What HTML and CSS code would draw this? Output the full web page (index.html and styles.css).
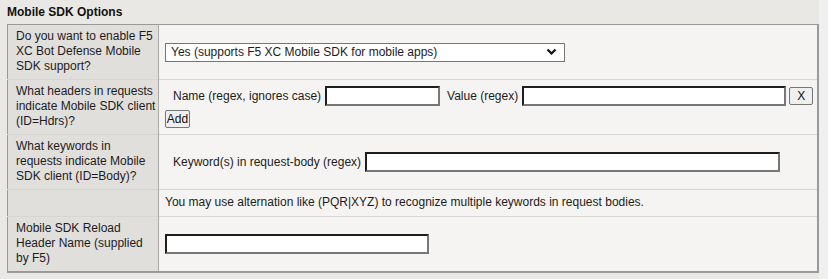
FILE: index.html
```html
<!DOCTYPE html>
<html>
<head>
<title>Mobile SDK Options</title>
<link rel="stylesheet" href="styles.css">
</head>
<body>
  <div id="page">
    <h3 class="section-title">Mobile SDK Options</h3>
    <table class="options-table">
      <colgroup>
        <col class="label-col">
        <col>
      </colgroup>
      <tr>
        <td class="label-cell">Do you want to enable F5 XC Bot Defense Mobile SDK support?</td>
        <td class="value-cell">
          <div class="select-box">
            <span>Yes (supports F5 XC Mobile SDK for mobile apps)</span>
            <svg width="11" height="8" viewBox="0 0 11 8"><path d="M1.5 1.5 L5.5 5.5 L9.5 1.5" fill="none" stroke="#111" stroke-width="2.2"/></svg>
          </div>
        </td>
      </tr>
      <tr>
        <td class="label-cell">What headers in requests indicate Mobile SDK client (ID=Hdrs)?</td>
        <td class="value-cell">
          <div class="field-row">
            <span class="field-label">Name (regex, ignores case)</span>
            <input type="text" class="name-input">
            <span class="field-label value-label">Value (regex)</span>
            <input type="text" class="value-input">
            <button class="small-btn x-btn">X</button>
          </div>
          <button class="small-btn add-btn">Add</button>
        </td>
      </tr>
      <tr>
        <td class="label-cell">What keywords in requests indicate Mobile SDK client (ID=Body)?</td>
        <td class="value-cell">
          <div class="field-row">
            <span class="field-label">Keyword(s) in request-body (regex)</span>
            <input type="text" class="keyword-input">
          </div>
        </td>
      </tr>
      <tr>
        <td class="label-cell"></td>
        <td class="value-cell note">You may use alternation like (PQR|XYZ) to recognize multiple keywords in request bodies.</td>
      </tr>
      <tr>
        <td class="label-cell">Mobile SDK Reload Header Name (supplied by F5)</td>
        <td class="value-cell">
          <input type="text" class="reload-input">
        </td>
      </tr>
    </table>
  </div>
</body>
</html>
```

FILE: styles.css
```css
body {
  margin: 0;
  padding: 0;
  background-color: #f0f0f0;
  font-family: "Liberation Sans", Arial, sans-serif;
  font-size: 12px;
  color: #1c1c1c;
}

#page {
  width: 812px;
  padding: 5px 0 7px 7px;
  background-color: #e9e8e4;
}

.section-title {
  margin: 0 0 4px 0;
  font-size: 12px;
  line-height: 15px;
  font-weight: bold;
  color: #111;
}

.options-table {
  width: 812px;
  table-layout: fixed;
  border-collapse: collapse;
  border: 1px solid #999;
  border-right-width: 2px;
  border-bottom-width: 2px;
}

.label-col {
  width: 151px;
}

.options-table td {
  line-height: 15px;
  border-top: 1px solid #d6d5d2;
}

.options-table tr:first-child td {
  border-top: none;
}

.label-cell {
  padding: 4px 2px 5px 8px;
  background-color: #e0dfdc;
  border-right: 1px solid #a9a9a9;
  vertical-align: middle;
}

.value-cell {
  padding: 5px 6px;
  background-color: #f5f4f2;
  vertical-align: middle;
}

.note {
  padding: 5px 6px 6px 6px;
}

.select-box {
  display: flex;
  align-items: center;
  justify-content: space-between;
  box-sizing: border-box;
  width: 400px;
  height: 19px;
  padding: 0 7px 0 5px;
  border: 1px solid #767676;
  background-color: #fff;
}

.field-row {
  display: flex;
  align-items: center;
  margin-left: 8px;
  white-space: nowrap;
}

.field-label {
  margin-right: 4px;
}

.value-label {
  margin-left: 7px;
}

input[type="text"] {
  flex-shrink: 0;
  margin: 0;
  padding: 0;
  box-sizing: border-box;
  height: 20px;
  border: 2px solid;
  border-color: #1e1e1e #777 #777 #1e1e1e;
  background-color: #fff;
  vertical-align: middle;
}

.name-input {
  width: 115px;
}

.value-input {
  width: 264px;
}

.keyword-input {
  width: 415px;
}

.reload-input {
  width: 264px;
}

.small-btn {
  flex-shrink: 0;
  height: 18px;
  padding: 0 2px;
  font-family: "Liberation Sans", Arial, sans-serif;
  font-size: 12px;
  line-height: 15px;
  color: #111;
  background-color: #efefef;
  border: 1px solid #767676;
  border-radius: 2px;
}

.x-btn {
  width: 24px;
  margin-left: 3px;
}

.add-btn {
  display: block;
  width: 25px;
  margin-top: 4px;
  padding: 0;
}
```
